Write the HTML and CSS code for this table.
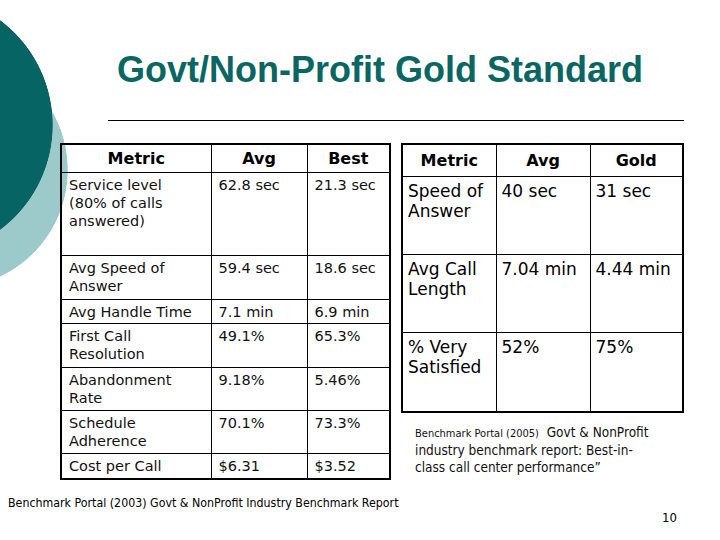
FILE: index.html
```html
<!DOCTYPE html>
<html>
<head>
<meta charset="utf-8">
<link rel="stylesheet" href="styles.css">
</head>
<body>
<div class="slide">
  <h1 class="title">Govt/Non-Profit Gold Standard</h1>
  <hr class="rule">
  <div class="tables">
    <table class="grid grid-left">
      <colgroup><col class="c-metric"><col class="c-avg"><col class="c-best"></colgroup>
      <tr class="hdr"><th>Metric</th><th>Avg</th><th>Best</th></tr>
      <tr class="r83"><td>Service level (80% of calls answered)</td><td>62.8 sec</td><td>21.3 sec</td></tr>
      <tr class="r44"><td>Avg Speed of Answer</td><td>59.4 sec</td><td>18.6 sec</td></tr>
      <tr class="r24"><td>Avg Handle Time</td><td>7.1 min</td><td>6.9 min</td></tr>
      <tr class="r44"><td>First Call Resolution</td><td>49.1%</td><td>65.3%</td></tr>
      <tr class="r43"><td>Abandonment Rate</td><td>9.18%</td><td>5.46%</td></tr>
      <tr class="r43"><td>Schedule Adherence</td><td>70.1%</td><td>73.3%</td></tr>
      <tr class="r26"><td>Cost per Call</td><td>$6.31</td><td>$3.52</td></tr>
    </table>
    <div class="side">
      <table class="grid grid-right">
        <colgroup><col class="c-r1"><col class="c-r2"><col class="c-r3"></colgroup>
        <tr class="hdr"><th>Metric</th><th>Avg</th><th>Gold</th></tr>
        <tr class="r78"><td>Speed of Answer</td><td>40 sec</td><td>31 sec</td></tr>
        <tr class="r78"><td>Avg Call Length</td><td>7.04 min</td><td>4.44 min</td></tr>
        <tr class="r80"><td>% Very Satisfied</td><td>52%</td><td>75%</td></tr>
      </table>
      <p class="note"><span class="note-small">Benchmark Portal (2005)</span>&nbsp; Govt &amp; NonProfit<br>industry benchmark report: Best-in-<br><span class="note-last">class call center performance”</span></p>
    </div>
  </div>
  <p class="source">Benchmark Portal (2003) Govt &amp; NonProfit Industry Benchmark Report</p>
  <p class="page">10</p>
</div>
</body>
</html>
```
FILE: styles.css
```css
html, body {
  margin: 0;
  padding: 0;
  background: #fff;
}

.slide {
  width: 720px;
  height: 540px;
  overflow: hidden;
  font-family: "DejaVu Sans", Verdana, sans-serif;
  color: #000;
  background:
    radial-gradient(circle 131px at -78px 125px, #066564 130.3px, rgba(6, 101, 100, 0) 131px) no-repeat,
    radial-gradient(circle 118px at -50px 170px, #9cc9c9 117.3px, rgba(156, 201, 201, 0) 118px) no-repeat,
    #fff;
}

.title {
  margin: 0;
  padding: 50px 0 0 117px;
  font-family: "Liberation Sans", Arial, sans-serif;
  font-weight: bold;
  font-size: 36px;
  line-height: 40px;
  color: #0a6662;
}

.rule {
  margin: 30px 0 0 108px;
  width: 576px;
  height: 0;
  border: 0;
  border-top: 1px solid #000;
}

.tables {
  display: flex;
  align-items: flex-start;
  gap: 10px;
  margin-top: 22px;
  padding-left: 60px;
}

.grid {
  border-collapse: collapse;
  table-layout: fixed;
  border: 2px solid #000;
}

.grid th,
.grid td {
  border: 1px solid #000;
  vertical-align: top;
  text-align: left;
  padding: 0;
}

.grid th {
  font-weight: bold;
  font-size: 16px;
  text-align: center;
  vertical-align: middle;
}

.grid-left { width: 329px; }
.c-metric { width: 150px; }
.c-avg { width: 96px; }
.c-best { width: 83px; }

.grid-left .hdr { height: 28px; }
.grid-left td {
  font-size: 14.5px;
  line-height: 18px;
  padding: 3px 7px 0 7px;
  color: #111;
}

.r83 { height: 83px; }
.r44 { height: 44px; }
.r43 { height: 43px; }
.r24 { height: 24px; }
.r26 { height: 26px; }
.r78 { height: 78px; }
.r80 { height: 80px; }

.grid-right { width: 281px; }
.c-r1 { width: 94px; }
.c-r2 { width: 94px; }
.c-r3 { width: 93px; }

.grid-right .hdr { height: 32px; }
.grid-right td {
  font-size: 17px;
  line-height: 20px;
  padding: 4px 5px 0 5px;
}

.note {
  margin: 11px 0 0 14px;
  font-family: "DejaVu Sans Condensed", Tahoma, sans-serif;
  font-size: 13.5px;
  line-height: 16px;
  color: #111;
}

.note-small {
  font-size: 11px;
}

.note-last {
  display: inline-block;
  margin-top: 1px;
}

.source {
  margin: 17px 0 0 8px;
  font-family: "DejaVu Sans Condensed", Tahoma, sans-serif;
  font-size: 12.3px;
  line-height: 13px;
}

.page {
  margin: 1px 0 0 0;
  padding-right: 43px;
  text-align: right;
  font-family: "DejaVu Sans Condensed", Tahoma, sans-serif;
  font-size: 13px;
  line-height: 13px;
}
```
